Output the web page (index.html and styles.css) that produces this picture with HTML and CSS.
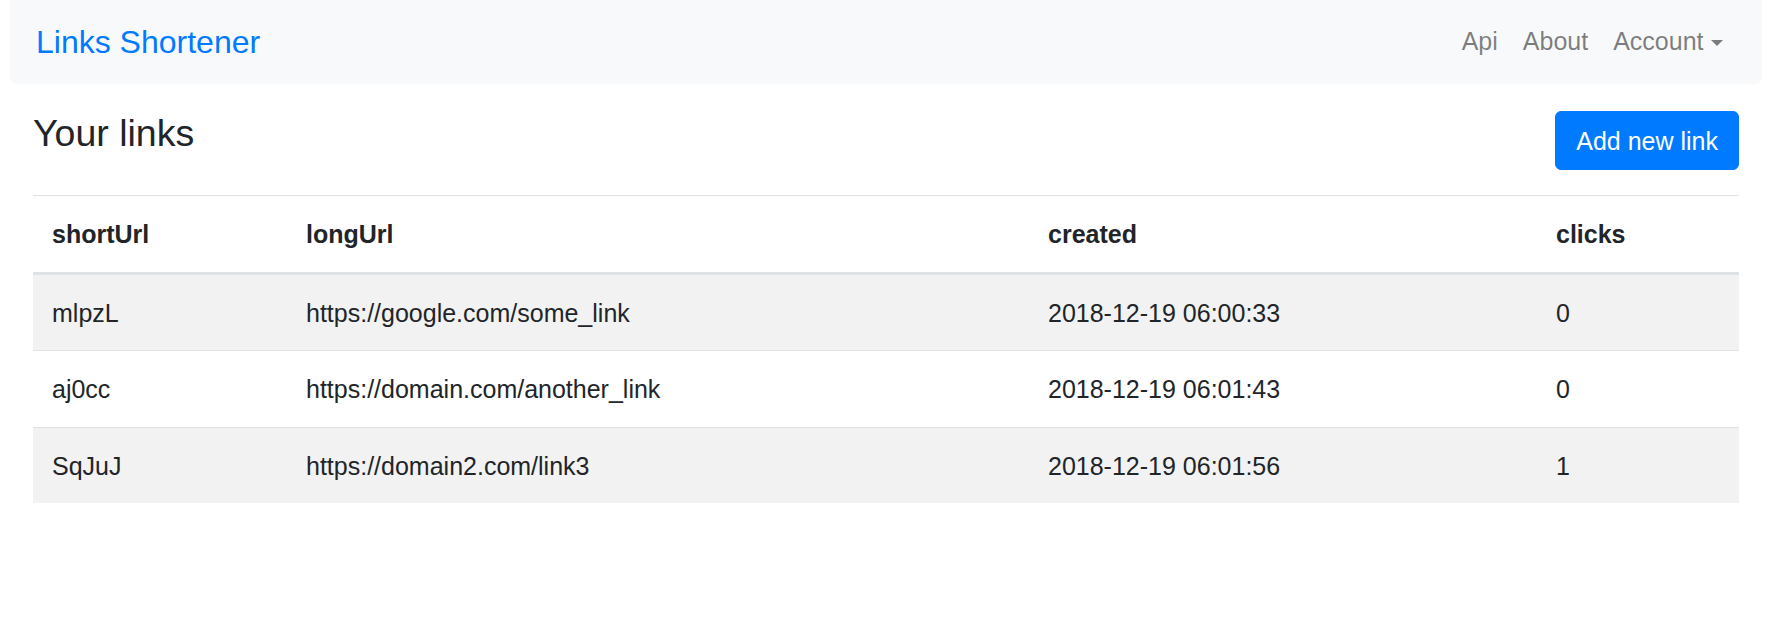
FILE: index.html
```html
<!DOCTYPE html>
<html lang="en">
<head>
<meta charset="utf-8">
<title>Links Shortener</title>
<link rel="stylesheet" href="styles.css">
</head>
<body>
<div class="page">
  <nav class="navbar">
    <a class="brand" href="#">Links Shortener</a>
    <ul class="nav">
      <li><a class="nav-link" href="#">Api</a></li>
      <li><a class="nav-link" href="#">About</a></li>
      <li><a class="nav-link dropdown" href="#">Account<span class="caret"></span></a></li>
    </ul>
  </nav>
  <main class="content">
    <div class="head-row">
      <h4 class="title">Your links</h4>
      <button class="btn" type="button">Add new link</button>
    </div>
    <table class="links">
      <colgroup>
        <col class="c1"><col class="c2"><col class="c3"><col class="c4">
      </colgroup>
      <thead>
        <tr><th>shortUrl</th><th>longUrl</th><th>created</th><th>clicks</th></tr>
      </thead>
      <tbody>
        <tr><td>mlpzL</td><td>https://google.com/some_link</td><td>2018-12-19 06:00:33</td><td>0</td></tr>
        <tr><td>aj0cc</td><td>https://domain.com/another_link</td><td>2018-12-19 06:01:43</td><td>0</td></tr>
        <tr><td>SqJuJ</td><td>https://domain2.com/link3</td><td>2018-12-19 06:01:56</td><td>1</td></tr>
      </tbody>
    </table>
  </main>
</div>
</body>
</html>
```
FILE: styles.css
```css
* { box-sizing: border-box; }

html, body {
  margin: 0;
  padding: 0;
  background: #fff;
}

body {
  font-family: "Liberation Sans", Arial, Helvetica, sans-serif;
  font-size: 25px;
  line-height: 1.5;
  color: #212529;
}

.page {
  padding: 0 19px 0 10px;
}

.navbar {
  display: flex;
  align-items: center;
  justify-content: space-between;
  height: 84px;
  padding: 0 27px 0 26px;
  background: #f8f9fa;
  border-radius: 0 0 7px 7px;
}

.brand {
  font-size: 32px;
  line-height: 48px;
  color: #007bff;
  text-decoration: none;
}

.nav {
  display: flex;
  align-items: center;
  list-style: none;
  margin: 0;
  padding: 0;
}

.nav-link {
  display: flex;
  align-items: center;
  padding: 12.5px 12.5px;
  line-height: 37.5px;
  color: rgba(0, 0, 0, 0.5);
  text-decoration: none;
}

.caret {
  display: inline-block;
  width: 0;
  height: 0;
  margin-left: 7px;
  margin-top: 2px;
  border-top: 6px solid rgba(0, 0, 0, 0.5);
  border-left: 6px solid transparent;
  border-right: 6px solid transparent;
}

.content {
  padding: 0 23px;
}

.head-row {
  display: flex;
  align-items: flex-start;
  justify-content: space-between;
  margin-top: 27px;
  margin-bottom: 25px;
}

.title {
  margin: 0;
  font-size: 37.5px;
  font-weight: 500;
  line-height: 45px;
  color: #212529;
}

.btn {
  font-family: inherit;
  font-size: 25px;
  line-height: 38px;
  padding: 9.5px 20px;
  color: #fff;
  background: #007bff;
  border: 1px solid #007bff;
  border-radius: 6px;
  cursor: pointer;
}

.links {
  width: 100%;
  table-layout: fixed;
  border-collapse: collapse;
}

.links .c1 { width: 254px; }
.links .c2 { width: 742px; }
.links .c3 { width: 508px; }
.links .c4 { width: 202px; }

.links th,
.links td {
  padding: 19px 19px 18.5px;
  line-height: 38px;
  text-align: left;
  vertical-align: top;
  border-top: 1px solid #dee2e6;
}

.links th {
  font-weight: 700;
  border-bottom: 3px solid #dee2e6;
}

.links tbody tr:nth-of-type(odd) {
  background: rgba(0, 0, 0, 0.05);
}
```
